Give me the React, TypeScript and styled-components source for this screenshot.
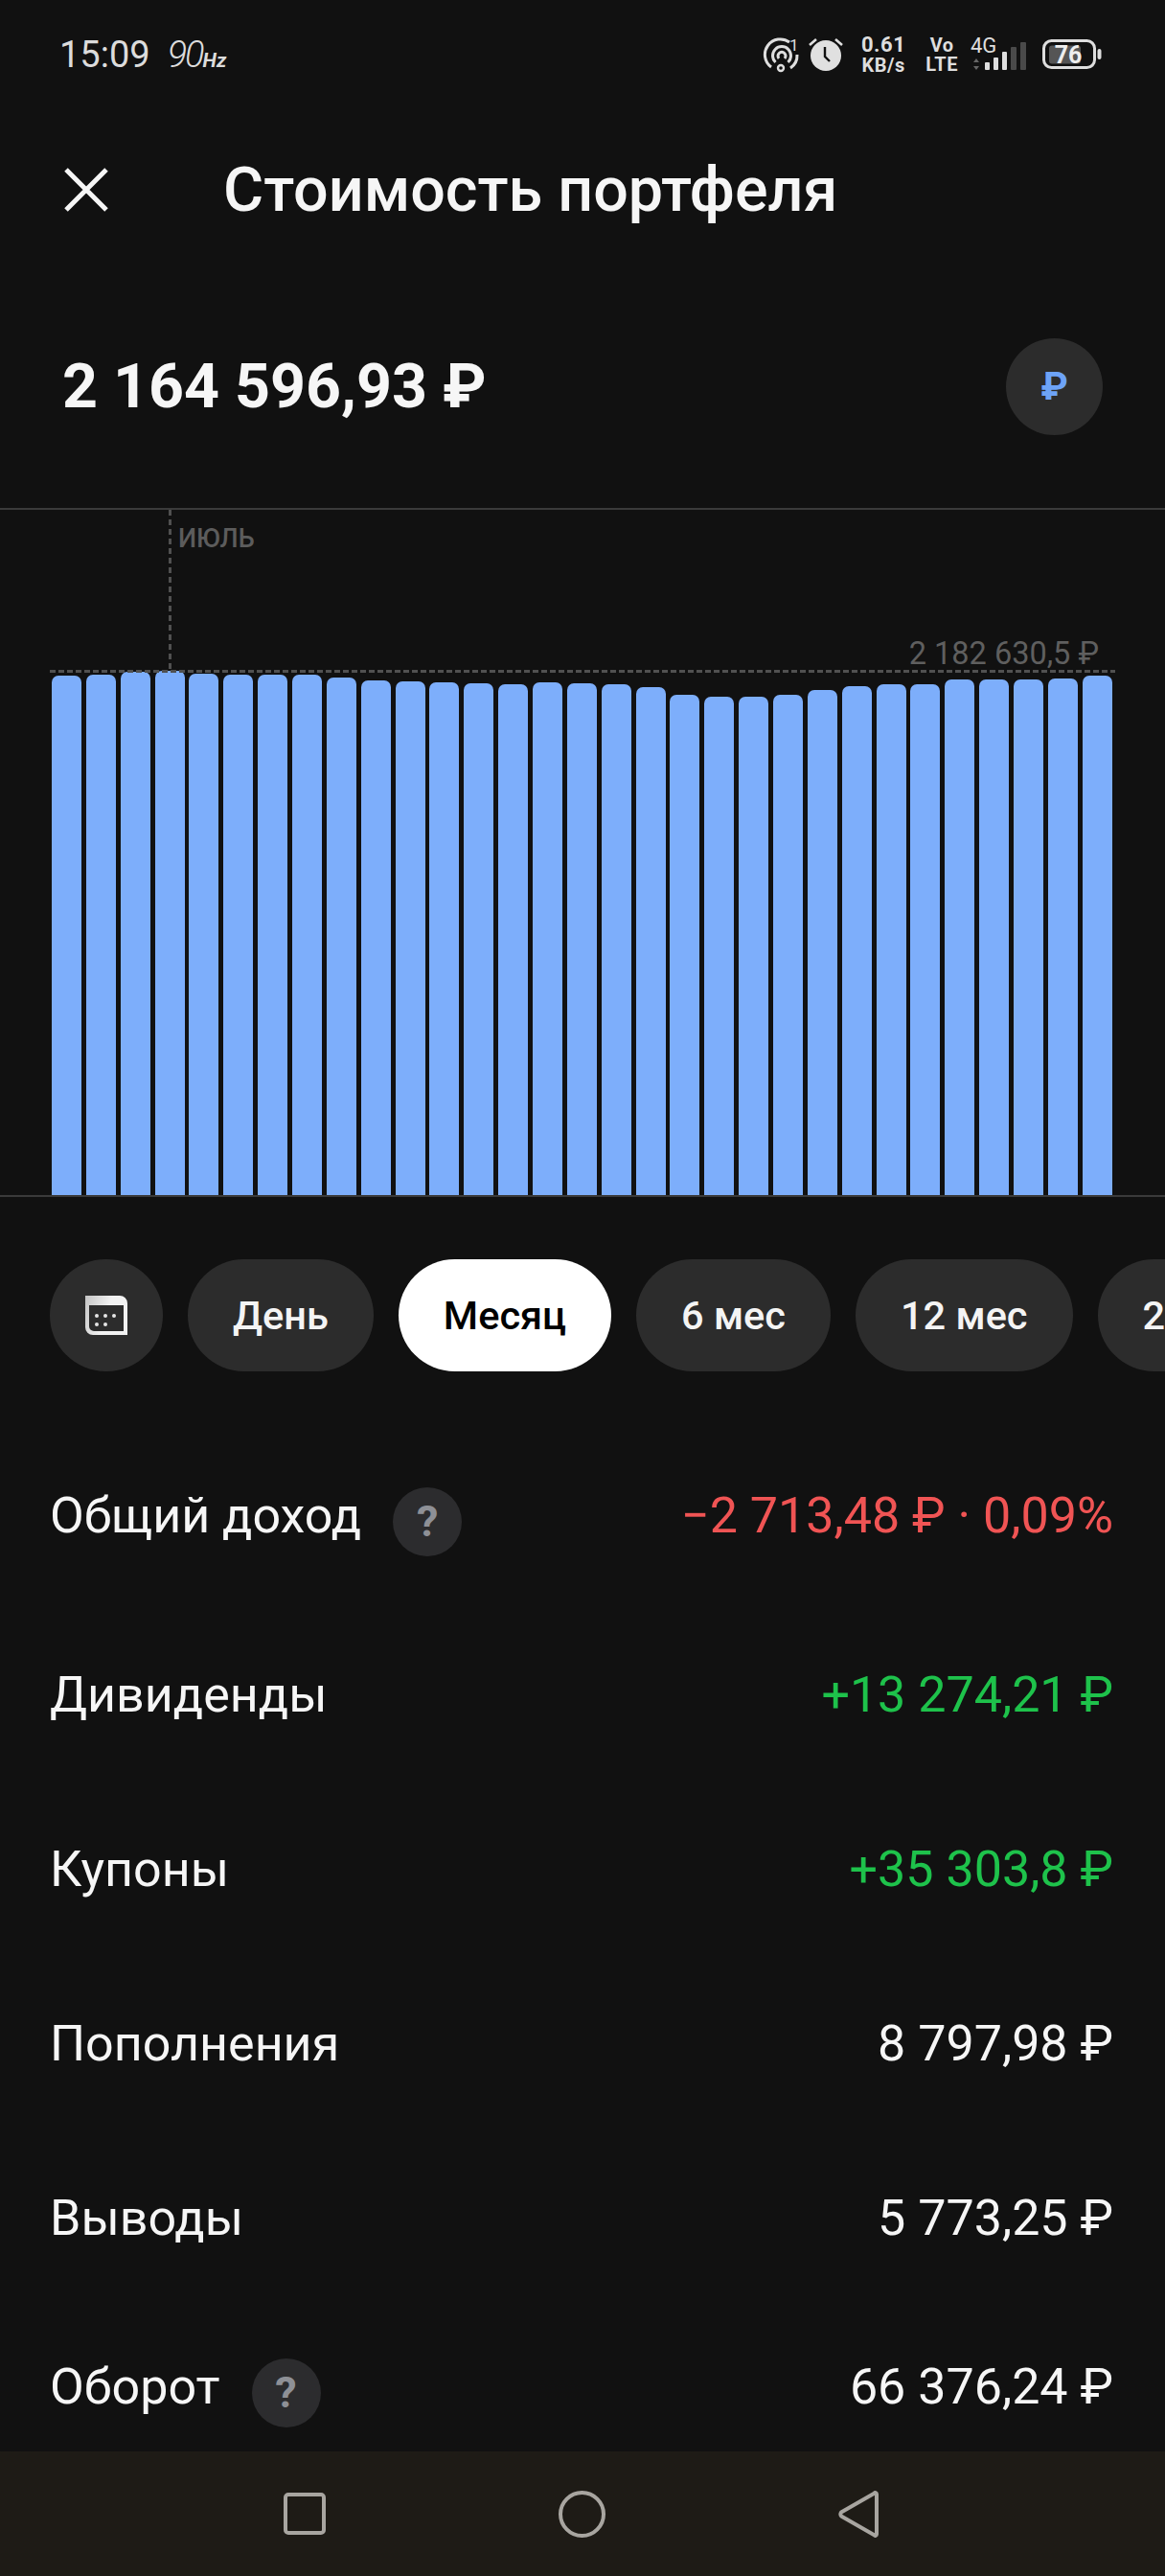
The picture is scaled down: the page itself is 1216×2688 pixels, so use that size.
import React from "react";
import styled, { createGlobalStyle } from "styled-components";

const Global = createGlobalStyle`
  html, body { margin: 0; padding: 0; background: #111111; }
  * { box-sizing: border-box; }
  body { font-family: Roboto, "Noto Sans", sans-serif; }
`;

const Page = styled.div`
  width: 1216px;
  height: 2688px;
  display: flex;
  flex-direction: column;
  overflow: hidden;
  background: #111111;
  color: #f6f6f6;
`;

const Content = styled.main`
  flex: 1;
  min-height: 0;
  overflow: hidden;
`;

const StatusBar = styled.div`
  height: 114px;
  display: flex;
  align-items: center;
  padding: 0 66px 0 62px;
  color: #dcdcdc;
`;

const Clock = styled.span`
  font-size: 38px;
  line-height: 1;
`;

const Rate = styled.span`
  margin-left: 18px;
  font-size: 38px;
  font-style: italic;
  font-weight: 300;
  letter-spacing: -2px;
  line-height: 1;
`;

const RateUnit = styled.span`
  font-size: 21px;
  font-weight: 700;
  letter-spacing: 0;
`;

const StatusIcons = styled.div`
  margin-left: auto;
  display: flex;
  align-items: center;
`;

const StatusSlot = styled.div<{ $left: number }>`
  display: flex;
  margin-left: ${(p) => p.$left}px;
`;

const StackText = styled.div<{ $size: number }>`
  display: flex;
  flex-direction: column;
  align-items: center;
  font-size: 20px;
  font-weight: 700;
  line-height: 20px;
  letter-spacing: 0.5px;
  color: #dedede;
  span:first-child {
    font-size: ${(p) => p.$size}px;
    line-height: ${(p) => p.$size}px;
  }
`;

const Header = styled.header`
  height: 168px;
  display: flex;
  align-items: center;
  padding-left: 66px;
`;

const Title = styled.h1`
  margin: 0 0 0 119px;
  font-size: 64.6px;
  font-weight: 500;
  line-height: 1;
  white-space: nowrap;
`;

const ValueRow = styled.section`
  height: 248px;
  display: flex;
  align-items: center;
  justify-content: space-between;
  padding: 0 65px 6px 65px;
`;

const Value = styled.div`
  font-size: 64.5px;
  font-weight: 700;
  white-space: nowrap;
`;

const CurrencyButton = styled.div`
  width: 101px;
  height: 101px;
  border-radius: 50%;
  background: #2c2c2c;
  display: flex;
  align-items: center;
  justify-content: center;
  color: #6da3f7;
  font-size: 40px;
  font-weight: 700;
`;

const Chart = styled.section`
  position: relative;
  height: 719px;
  border-top: 2px solid #3a3a3a;
  border-bottom: 2px solid #3a3a3a;
  padding: 0 55px 0 54px;
  display: flex;
  align-items: flex-end;
  justify-content: space-between;
`;

const Bar = styled.div<{ $h: number }>`
  width: 31px;
  height: ${(p) => p.$h}px;
  background: #7daefb;
  border-radius: 7px 7px 0 0;
`;

const MaxLine = styled.div`
  position: absolute;
  left: 52px;
  right: 52px;
  top: 167px;
  height: 3px;
  background: repeating-linear-gradient(90deg, #505050 0 6px, transparent 6px 9px);
`;

const CursorLine = styled.div`
  position: absolute;
  left: 176px;
  top: 0;
  height: 167px;
  width: 3px;
  background: repeating-linear-gradient(180deg, #505050 0 6px, transparent 6px 10px);
`;

const MonthLabel = styled.span`
  position: absolute;
  left: 186px;
  top: 12px;
  font-size: 27px;
  font-weight: 500;
  line-height: 36px;
  color: #5c5c5c;
`;

const MaxLabel = styled.span`
  position: absolute;
  right: 69px;
  top: 130px;
  font-size: 32.5px;
  line-height: 40px;
  color: #5f5f5f;
  white-space: nowrap;
`;

const Periods = styled.nav`
  display: flex;
  gap: 26px;
  margin-top: 65px;
  padding-left: 52px;
  overflow: hidden;
`;

const Pill = styled.div<{ $active?: boolean }>`
  flex: none;
  height: 117px;
  padding: 0 47px;
  border-radius: 59px;
  display: flex;
  align-items: center;
  font-size: 41.5px;
  font-weight: 500;
  background: ${(p) => (p.$active ? "#ffffff" : "#2c2c2c")};
  color: ${(p) => (p.$active ? "#000000" : "#f4f4f4")};
`;

const IconPill = styled(Pill)`
  width: 118px;
  padding: 0;
  justify-content: center;
`;

const Rows = styled.section`
  margin-top: 121px;
  padding: 0 54px 0 52px;
`;

const Row = styled.div<{ $h?: number }>`
  height: ${(p) => p.$h ?? 182}px;
  display: flex;
  justify-content: space-between;
  align-items: flex-start;
  font-size: 52px;
  line-height: 60px;
  white-space: nowrap;
`;

const Label = styled.div`
  display: flex;
  align-items: flex-start;
`;

const Help = styled.span`
  width: 72px;
  height: 72px;
  margin-left: 33px;
  border-radius: 50%;
  background: #2c2c2e;
  color: #8e9096;
  font-size: 45px;
  font-weight: 700;
  line-height: 72px;
  text-align: center;
`;

const Amount = styled.div<{ $tone?: "red" | "green" }>`
  color: ${(p) => (p.$tone === "red" ? "#f05454" : p.$tone === "green" ? "#1ec24b" : "#f6f6f6")};
`;

const NavBar = styled.footer`
  flex: none;
  height: 130px;
  background: #1e1b16;
  display: flex;
  align-items: center;
  justify-content: center;
  gap: 243px;
  padding-right: 4px;
`;

const AlarmIcon = () => (
  <svg width="36" height="34" viewBox="0 0 36 34" aria-hidden>
    <circle cx="18" cy="18" r="16" fill="#e0e0e0" />
    <path d="M17 9v10l5 5" fill="none" stroke="#111" strokeWidth="2.4" />
    <path d="M1 7l7-6M28 1l7 6" fill="none" stroke="#e0e0e0" strokeWidth="2.6" />
  </svg>
);

const HotspotIcon = () => (
  <svg width="38" height="44" viewBox="0 -4 38 44" aria-hidden fill="none" stroke="#dedede" strokeWidth="3">
    <path d="M9 31A16 16 0 0 1 28 5" />
    <path d="M36 18A16 16 0 0 1 29 32" />
    <path d="M13.5 26A9.5 9.5 0 1 1 26.5 26" />
    <path d="M17 22A4 4 0 1 1 23 22" />
    <circle cx="19" cy="32" r="3" strokeWidth="2.4" />
    <text x="28" y="14" fontSize="17" fontFamily="Roboto, sans-serif" fill="#dedede" stroke="none">1</text>
  </svg>
);

const NetworkIcon = () => (
  <svg width="60" height="48" viewBox="0 -6 60 48" aria-hidden>
    <text x="0" y="16" fontSize="22" fontFamily="Roboto, sans-serif" fill="#dedede">4G</text>
    <path d="M3 26l3-4 3 4zM3 30l3 4 3-4z" fill="#666" />
    <rect x="15" y="26" width="5" height="8" rx="1" fill="#dedede" />
    <rect x="24" y="21" width="5" height="13" rx="1" fill="#dedede" />
    <rect x="33" y="15" width="5" height="19" rx="1" fill="#dedede" />
    <rect x="42" y="10" width="6" height="24" rx="1" fill="#4a4a4a" />
    <rect x="52" y="5" width="6" height="29" rx="1" fill="#4a4a4a" />
  </svg>
);

const BatteryIcon = () => (
  <svg width="62" height="32" viewBox="0 0 62 32" aria-hidden>
    <rect x="1.5" y="1.5" width="53" height="28" rx="8" fill="none" stroke="#dedede" strokeWidth="3" />
    <rect x="7" y="6.5" width="33" height="19" rx="3" fill="#555" />
    <text x="27" y="25" textAnchor="middle" fontSize="25" fontWeight="700" fontFamily="Roboto, sans-serif" fill="#eee">76</text>
    <rect x="57.5" y="10" width="4" height="11" rx="2" fill="#dedede" />
  </svg>
);

const CloseIcon = () => (
  <svg width="48" height="48" viewBox="0 0 48 48" aria-hidden>
    <path d="M3 3l42 42M45 3L3 45" stroke="#f6f6f6" strokeWidth="5" fill="none" />
  </svg>
);

const CalendarIcon = () => (
  <svg width="44" height="41" viewBox="0 0 44 41" aria-hidden>
    <defs>
      <linearGradient id="calendarShade" x1="0" y1="0" x2="1" y2="0.3">
        <stop offset="0" stopColor="#c4c4c4" />
        <stop offset="0.6" stopColor="#f2f2f2" />
      </linearGradient>
    </defs>
    <path
      fillRule="evenodd"
      d="M0 0h36a8 8 0 0 1 8 8v33H8a8 8 0 0 1-8-8zM4 10v22a5 5 0 0 0 5 5h31V10z"
      fill="url(#calendarShade)"
    />
    <g fill="#e4e4e4">
      <circle cx="12" cy="21" r="2" />
      <circle cx="21" cy="21" r="2" />
      <circle cx="30" cy="21" r="2" />
      <circle cx="12" cy="30" r="2" />
      <circle cx="21" cy="30" r="2" />
    </g>
  </svg>
);

const NavSquare = () => (
  <svg width="44" height="44" viewBox="0 0 44 44" aria-hidden>
    <rect x="2" y="2" width="40" height="40" rx="3" fill="none" stroke="#a8a5a0" strokeWidth="4" />
  </svg>
);

const NavCircle = () => (
  <svg width="49" height="49" viewBox="0 0 49 49" aria-hidden>
    <circle cx="24.5" cy="24.5" r="22.5" fill="none" stroke="#a8a5a0" strokeWidth="4" />
  </svg>
);

const NavBack = () => (
  <svg width="42" height="49" viewBox="0 0 42 49" aria-hidden>
    <path
      d="M40 3.5v42a1.4 1.4 0 0 1-2.5.8L3 26.5a3.6 3.6 0 0 1 0-4L37.5 2.7a1.4 1.4 0 0 1 2.5.8z"
      fill="none"
      stroke="#a8a5a0"
      strokeWidth="4"
      strokeLinejoin="round"
    />
  </svg>
);

const TOPS = [
  705, 704, 701, 700, 703, 704, 704, 704, 707, 710, 711, 712, 713, 714, 712, 713, 714, 717, 725, 727, 727,
  725, 720, 716, 714, 714, 709, 709, 709, 708, 705,
];

const PERIODS = ["6 мес", "12 мес", "2 года"];

const DATA: { label: string; amount: string; tone?: "red" | "green"; help?: boolean; h?: number }[] = [
  { label: "Общий доход", amount: "−2 713,48 ₽ · 0,09%", tone: "red", help: true, h: 187 },
  { label: "Дивиденды", amount: "+13 274,21 ₽", tone: "green" },
  { label: "Купоны", amount: "+35 303,8 ₽", tone: "green" },
  { label: "Пополнения", amount: "8 797,98 ₽" },
  { label: "Выводы", amount: "5 773,25 ₽", h: 176 },
  { label: "Оборот", amount: "66 376,24 ₽", help: true },
];

export default function App() {
  return (
    <Page>
      <Global />
      <Content>
        <StatusBar>
          <Clock>15:09</Clock>
          <Rate>
            90<RateUnit>Hz</RateUnit>
          </Rate>
          <StatusIcons>
            <StatusSlot $left={0}><HotspotIcon /></StatusSlot>
            <StatusSlot $left={10}><AlarmIcon /></StatusSlot>
            <StatusSlot $left={19}>
              <StackText $size={22}><span>0.61</span><span>KB/s</span></StackText>
            </StatusSlot>
            <StatusSlot $left={21}>
              <StackText $size={20}><span>Vo</span><span>LTE</span></StackText>
            </StatusSlot>
            <StatusSlot $left={13}><NetworkIcon /></StatusSlot>
            <StatusSlot $left={15}><BatteryIcon /></StatusSlot>
          </StatusIcons>
        </StatusBar>

        <Header>
          <CloseIcon />
          <Title>Стоимость портфеля</Title>
        </Header>

        <ValueRow>
          <Value>2 164 596,93 ₽</Value>
          <CurrencyButton>₽</CurrencyButton>
        </ValueRow>

        <Chart>
          {TOPS.map((top, i) => (
            <Bar key={i} $h={1247 - top} />
          ))}
          <MaxLine />
          <CursorLine />
          <MonthLabel>ИЮЛЬ</MonthLabel>
          <MaxLabel>2 182 630,5 ₽</MaxLabel>
        </Chart>

        <Periods>
          <IconPill><CalendarIcon /></IconPill>
          <Pill>День</Pill>
          <Pill $active>Месяц</Pill>
          {PERIODS.map((p) => (
            <Pill key={p}>{p}</Pill>
          ))}
        </Periods>

        <Rows>
          {DATA.map((r) => (
            <Row key={r.label} $h={r.h}>
              <Label>
                {r.label}
                {r.help && <Help>?</Help>}
              </Label>
              <Amount $tone={r.tone}>{r.amount}</Amount>
            </Row>
          ))}
        </Rows>
      </Content>
      <NavBar>
        <NavSquare />
        <NavCircle />
        <NavBack />
      </NavBar>
    </Page>
  );
}
